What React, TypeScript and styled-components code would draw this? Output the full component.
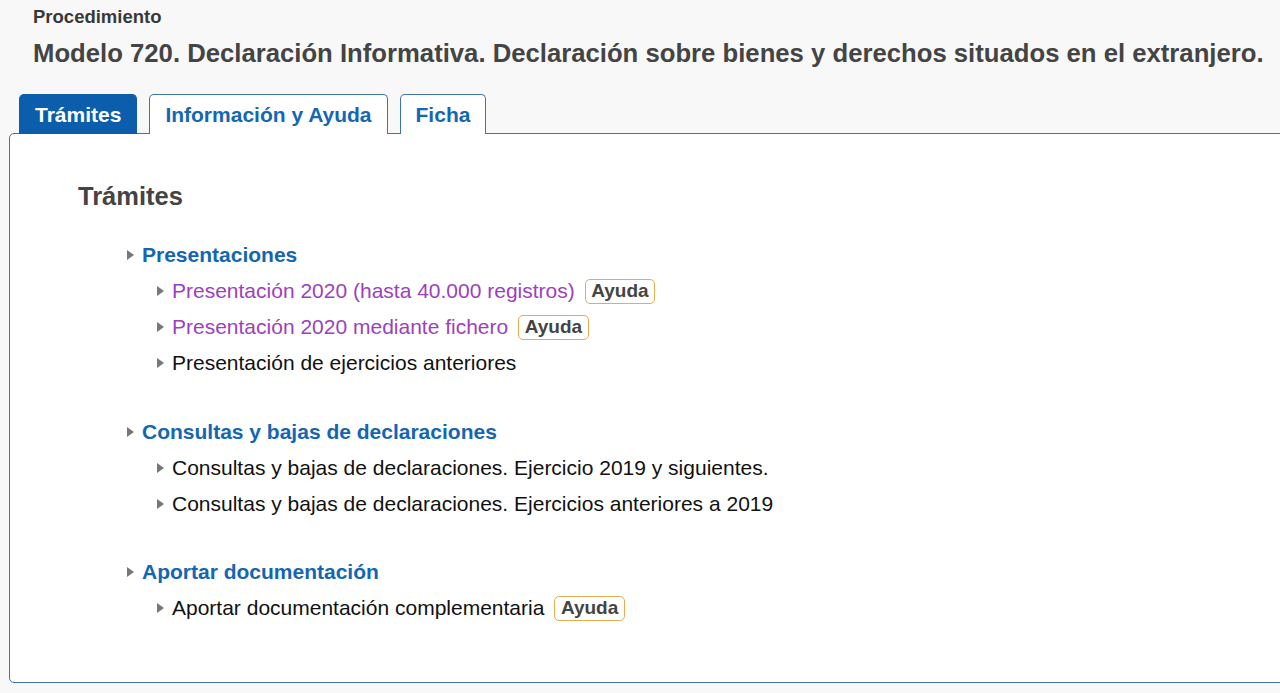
import React from "react";
import styled, { createGlobalStyle } from "styled-components";

const GlobalStyle = createGlobalStyle`
  html, body {
    margin: 0;
    padding: 0;
    background: #f8f8f8;
    font-family: "Liberation Sans", Arial, Helvetica, sans-serif;
    overflow: hidden;
  }
`;

const Page = styled.div`
  width: 1280px;
  height: 693px;
  overflow: hidden;
  background: #f8f8f8;
`;

const Header = styled.header`
  padding: 6px 0 0 33px;
`;

const Kicker = styled.div`
  font-size: 18.5px;
  font-weight: 700;
  color: #383838;
  line-height: 22px;
`;

const Title = styled.h1`
  margin: 10px 0 0;
  font-size: 25.7px;
  font-weight: 700;
  color: #444;
  line-height: 30px;
  white-space: nowrap;
`;

const Tabs = styled.nav`
  display: flex;
  gap: 12px;
  margin: 26px 0 0 19px;
  position: relative;
  z-index: 1;
`;

const Tab = styled.div<{ $active?: boolean }>`
  height: 40px;
  box-sizing: border-box;
  padding: 0 15px;
  display: flex;
  align-items: center;
  font-size: 21px;
  font-weight: 700;
  border: 1.5px solid #3f74aa;
  border-bottom: none;
  border-radius: 5px 5px 0 0;
  background: ${(p) => (p.$active ? "#0c5dab" : "#fff")};
  color: ${(p) => (p.$active ? "#fff" : "#1566b3")};
  ${(p) => (p.$active ? "border-color: #0c5dab;" : "")}
`;

const Panel = styled.section`
  margin: -1px -30px 0 9px;
  height: 550px;
  box-sizing: border-box;
  background: #fff;
  border: 1.5px solid #4174a9;
  border-radius: 5px;
  padding: 47px 0 0 68px;
`;

const Heading = styled.h2`
  margin: 0;
  font-size: 25.5px;
  font-weight: 700;
  color: #444;
  line-height: 30px;
`;

const Sections = styled.div`
  display: flex;
  flex-direction: column;
  gap: 32.5px;
  margin: 26px 0 0 49px;
`;

const Section = styled.div`
  display: flex;
  flex-direction: column;
`;

const Row = styled.div<{ $indent?: number }>`
  display: flex;
  align-items: center;
  height: 36px;
  padding-left: ${(p) => p.$indent ?? 0}px;
  white-space: nowrap;
`;

const Arrow = styled.span`
  width: 0;
  height: 0;
  border-top: 5.5px solid transparent;
  border-bottom: 5.5px solid transparent;
  border-left: 7px solid #777;
  margin-right: 8px;
  flex: none;
`;

const SectionLink = styled.span`
  font-size: 21px;
  font-weight: 700;
  color: #1466b3;
`;

const ItemLink = styled.span<{ $visited?: boolean }>`
  font-size: 21px;
  color: ${(p) => (p.$visited ? "#9c3fc0" : "#111")};
`;

const Badge = styled.span`
  margin-left: 10px;
  height: 25px;
  box-sizing: border-box;
  display: inline-flex;
  align-items: center;
  padding: 0 5.5px;
  border: 1.6px solid #e3ae50;
  border-radius: 5px;
  font-size: 19px;
  font-weight: 700;
  color: #444;
  background: #fff;
`;

type Item = { label: string; visited?: boolean; help?: boolean };
type Group = { title: string; items: Item[] };

const groups: Group[] = [
  {
    title: "Presentaciones",
    items: [
      { label: "Presentación 2020 (hasta 40.000 registros)", visited: true, help: true },
      { label: "Presentación 2020 mediante fichero", visited: true, help: true },
      { label: "Presentación de ejercicios anteriores" },
    ],
  },
  {
    title: "Consultas y bajas de declaraciones",
    items: [
      { label: "Consultas y bajas de declaraciones. Ejercicio 2019 y siguientes." },
      { label: "Consultas y bajas de declaraciones. Ejercicios anteriores a 2019" },
    ],
  },
  {
    title: "Aportar documentación",
    items: [{ label: "Aportar documentación complementaria", help: true }],
  },
];

export default function App() {
  return (
    <Page>
      <GlobalStyle />
      <Header>
        <Kicker>Procedimiento</Kicker>
        <Title>
          Modelo 720. Declaración Informativa. Declaración sobre bienes y derechos situados en el extranjero.
        </Title>
      </Header>
      <Tabs>
        <Tab $active>Trámites</Tab>
        <Tab>Información y Ayuda</Tab>
        <Tab>Ficha</Tab>
      </Tabs>
      <Panel>
        <Heading>Trámites</Heading>
        <Sections>
          {groups.map((g) => (
            <Section key={g.title}>
              <Row>
                <Arrow />
                <SectionLink>{g.title}</SectionLink>
              </Row>
              {g.items.map((it) => (
                <Row key={it.label} $indent={30}>
                  <Arrow />
                  <ItemLink $visited={it.visited}>{it.label}</ItemLink>
                  {it.help && <Badge>Ayuda</Badge>}
                </Row>
              ))}
            </Section>
          ))}
        </Sections>
      </Panel>
    </Page>
  );
}
